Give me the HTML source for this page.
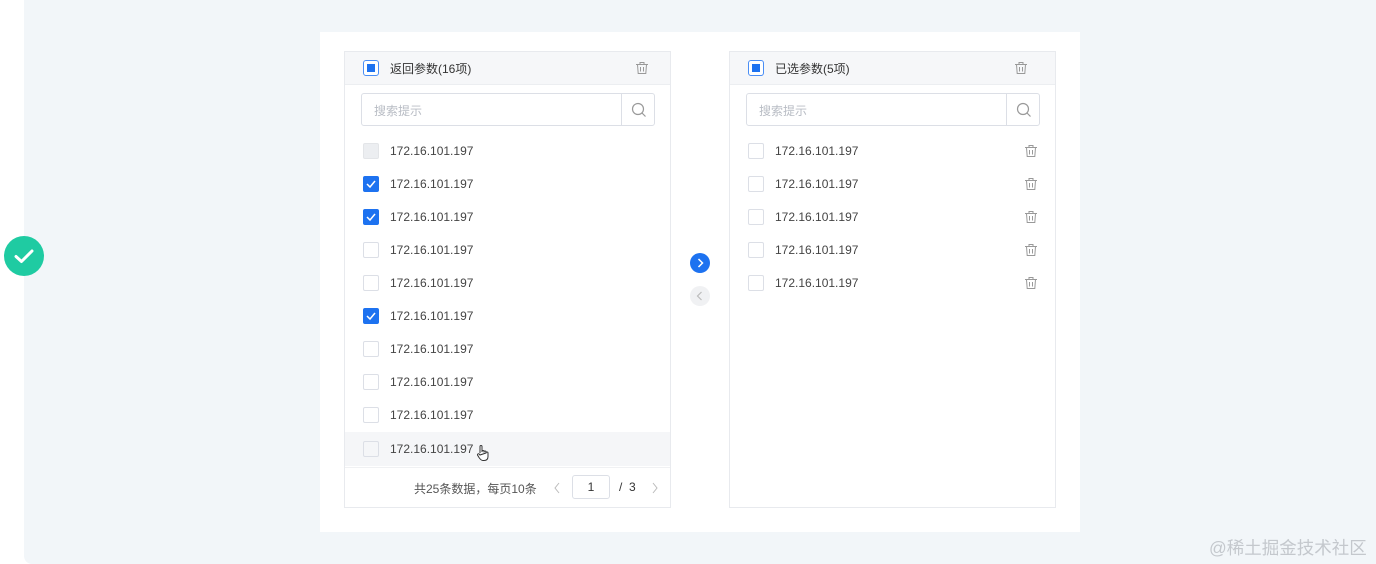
<!DOCTYPE html>
<html><head><meta charset="utf-8"><style>
*{box-sizing:border-box;margin:0;padding:0}
body{width:1376px;height:564px;background:#fff;position:relative;overflow:hidden;font-family:"Liberation Sans","Noto Sans CJK SC",sans-serif;color:#333;font-size:12px}
.bg{position:absolute;left:24px;top:0;width:1352px;height:564px;background:#f2f6f9;border-radius:0 0 0 8px}
.card{position:absolute;left:320px;top:32px;width:760px;height:500px;background:#fff}
.panel{position:absolute;top:51px;width:327px;height:457px;border:1px solid #e8eaee;background:#fff}
.hd{height:33px;background:#f6f7f9;border-bottom:1px solid #eceef1;position:relative}
.hd .t{position:absolute;left:45px;top:8px;font-size:12px;color:#333}
.cb{position:absolute;width:16px;height:16px;border:1px solid #dcdfe6;border-radius:2px;background:#fff}
.cb.on{background:#1d72f0;border-color:#1d72f0}
.cb.dis{background:#eceef1;border-color:#e3e5e8}
.cb.ind{border-color:#4a8ef5;border-radius:3px}
.cb.ind:after{content:"";position:absolute;left:3px;top:3px;width:8px;height:8px;background:#1d72f0}
.search{position:absolute;left:16px;top:41px;width:294px;height:33px;border:1px solid #dcdfe6;border-radius:3px}
.search span{position:absolute;left:12px;top:8px;color:#b8bcc4;font-size:12px}
.search .ic{position:absolute;right:0;top:0;width:33px;height:31px;border-left:1px solid #dcdfe6}
.row{position:absolute;left:0;width:325px;height:33px}
.row .cb{left:18px;top:8px}
.row .tx{position:absolute;left:45px;top:9px;font-size:12px;color:#444}
.trash{position:absolute}
</style></head><body>
<div class="bg"></div>
<svg style="position:absolute;left:4px;top:236px" width="40" height="40"><circle cx="20" cy="20" r="20" fill="#1fcba2"/><path d="M12 20.5l5.5 5 10.5-10.5" stroke="#fff" stroke-width="3" fill="none" stroke-linecap="round" stroke-linejoin="round"/></svg>
<div class="card"></div>

<div class="panel" style="left:344px">
 <div class="hd"><div class="cb ind" style="left:18px;top:8px"></div><div class="t">返回参数(16项)</div>
 <svg class="trash" style="left:290px;top:9px" width="14" height="14" viewBox="0 0 14 14" fill="none" stroke="#999" stroke-width="1"><path d="M1 3.5h12M5 3.5V1.5h4v2M2.5 3.5l.7 9h7.6l.7-9M5.5 6v4.5M8.5 6v4.5"/></svg></div>
 <div class="search"><span>搜索提示</span><div class="ic"><svg style="position:absolute;left:9px;top:8px" width="16" height="16" fill="none" stroke="#999" stroke-width="1.2"><circle cx="7" cy="7" r="5.5"/><path d="M11 11l3.5 3.5"/></svg></div></div>
 <div class="row" style="top:83px"><div class="cb dis"></div><div class="tx">172.16.101.197</div></div>
 <div class="row" style="top:116px"><div class="cb on"><svg width="14" height="14"><path d="M3 7l3 3 5-6" stroke="#fff" stroke-width="1.5" fill="none"/></svg></div><div class="tx">172.16.101.197</div></div>
 <div class="row" style="top:149px"><div class="cb on"><svg width="14" height="14"><path d="M3 7l3 3 5-6" stroke="#fff" stroke-width="1.5" fill="none"/></svg></div><div class="tx">172.16.101.197</div></div>
 <div class="row" style="top:182px"><div class="cb"></div><div class="tx">172.16.101.197</div></div>
 <div class="row" style="top:215px"><div class="cb"></div><div class="tx">172.16.101.197</div></div>
 <div class="row" style="top:248px"><div class="cb on"><svg width="14" height="14"><path d="M3 7l3 3 5-6" stroke="#fff" stroke-width="1.5" fill="none"/></svg></div><div class="tx">172.16.101.197</div></div>
 <div class="row" style="top:281px"><div class="cb"></div><div class="tx">172.16.101.197</div></div>
 <div class="row" style="top:314px"><div class="cb"></div><div class="tx">172.16.101.197</div></div>
 <div class="row" style="top:347px"><div class="cb"></div><div class="tx">172.16.101.197</div></div>
 <div class="row" style="top:380px;height:34px;background:#f5f6f8"><div class="cb" style="background:#f5f6f8;top:9px"></div><div class="tx" style="top:10px">172.16.101.197</div>
 <svg style="position:absolute;left:131px;top:12px" width="14" height="18" fill="#fff" stroke="#333" stroke-width="1"><path d="M4 9V2.5a1 1 0 0 1 2 0V8M6 7.5a1 1 0 0 1 2 0V8.5M8 8a1 1 0 0 1 2 0v1M10 9a1 1 0 0 1 2 0v3.5c0 2.5-1.5 4-4 4H7c-2 0-3-1.5-4-3L1.5 11a1 1 0 0 1 1.8-.8L4 11z"/></svg></div>
 <div style="position:absolute;left:0;top:415px;width:325px;border-top:1px solid #f0f1f3"></div>
 <div style="position:absolute;left:69px;top:428px;color:#555">共25条数据，每页10条</div>
 <svg style="position:absolute;left:207px;top:429px" width="10" height="14" fill="none" stroke="#bbb"><path d="M7 2L3 7l4 5"/></svg>
 <div style="position:absolute;left:227px;top:423px;width:38px;height:24px;border:1px solid #dcdfe6;border-radius:3px;text-align:center;line-height:22px;color:#333">1</div>
 <div style="position:absolute;left:274px;top:428px;color:#333">/&nbsp;&nbsp;3</div>
 <svg style="position:absolute;left:305px;top:429px" width="10" height="14" fill="none" stroke="#bbb"><path d="M3 2l4 5-4 5"/></svg>
</div>

<svg style="position:absolute;left:690px;top:253px" width="20" height="20"><circle cx="10" cy="10" r="10" fill="#1d72f0"/><path d="M8.5 6l4 4-4 4" stroke="#fff" stroke-width="1.5" fill="none"/></svg>
<svg style="position:absolute;left:690px;top:286px" width="20" height="20"><circle cx="10" cy="10" r="10" fill="#f0f1f3"/><path d="M11.5 6l-4 4 4 4" stroke="#bbb" stroke-width="1.2" fill="none"/></svg>

<div class="panel" style="left:729px">
 <div class="hd"><div class="cb ind" style="left:18px;top:8px"></div><div class="t">已选参数(5项)</div>
 <svg class="trash" style="left:284px;top:9px" width="14" height="14" viewBox="0 0 14 14" fill="none" stroke="#999" stroke-width="1"><path d="M1 3.5h12M5 3.5V1.5h4v2M2.5 3.5l.7 9h7.6l.7-9M5.5 6v4.5M8.5 6v4.5"/></svg></div>
 <div class="search"><span>搜索提示</span><div class="ic"><svg style="position:absolute;left:9px;top:8px" width="16" height="16" fill="none" stroke="#999" stroke-width="1.2"><circle cx="7" cy="7" r="5.5"/><path d="M11 11l3.5 3.5"/></svg></div></div>
 <div class="row" style="top:83px"><div class="cb"></div><div class="tx">172.16.101.197</div><svg class="trash" style="left:294px;top:9px" width="14" height="14" viewBox="0 0 14 14" fill="none" stroke="#999"><path d="M1 3.5h12M5 3.5V1.5h4v2M2.5 3.5l.7 9h7.6l.7-9M5.5 6v4.5M8.5 6v4.5"/></svg></div>
 <div class="row" style="top:116px"><div class="cb"></div><div class="tx">172.16.101.197</div><svg class="trash" style="left:294px;top:9px" width="14" height="14" viewBox="0 0 14 14" fill="none" stroke="#999"><path d="M1 3.5h12M5 3.5V1.5h4v2M2.5 3.5l.7 9h7.6l.7-9M5.5 6v4.5M8.5 6v4.5"/></svg></div>
 <div class="row" style="top:149px"><div class="cb"></div><div class="tx">172.16.101.197</div><svg class="trash" style="left:294px;top:9px" width="14" height="14" viewBox="0 0 14 14" fill="none" stroke="#999"><path d="M1 3.5h12M5 3.5V1.5h4v2M2.5 3.5l.7 9h7.6l.7-9M5.5 6v4.5M8.5 6v4.5"/></svg></div>
 <div class="row" style="top:182px"><div class="cb"></div><div class="tx">172.16.101.197</div><svg class="trash" style="left:294px;top:9px" width="14" height="14" viewBox="0 0 14 14" fill="none" stroke="#999"><path d="M1 3.5h12M5 3.5V1.5h4v2M2.5 3.5l.7 9h7.6l.7-9M5.5 6v4.5M8.5 6v4.5"/></svg></div>
 <div class="row" style="top:215px"><div class="cb"></div><div class="tx">172.16.101.197</div><svg class="trash" style="left:294px;top:9px" width="14" height="14" viewBox="0 0 14 14" fill="none" stroke="#999"><path d="M1 3.5h12M5 3.5V1.5h4v2M2.5 3.5l.7 9h7.6l.7-9M5.5 6v4.5M8.5 6v4.5"/></svg></div>
</div>

<div style="position:absolute;left:1209px;top:535px;font-size:17.5px;color:#c4c8cd;white-space:nowrap">@稀土掘金技术社区</div>
</body></html>
